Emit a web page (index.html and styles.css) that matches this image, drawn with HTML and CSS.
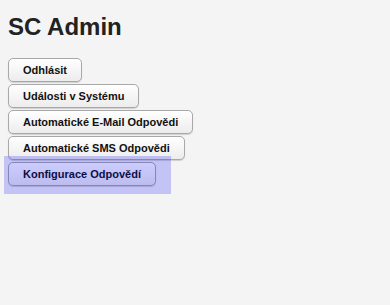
FILE: index.html
```html
<!DOCTYPE html>
<html lang="cs">
<head>
    <meta charset="UTF-8"/>
    <title>SC Admin</title>
    <link rel="stylesheet" href="styles.css">
</head>
<body>

<h1>SC Admin</h1>
<div class="menu">
    <button type="button">Odhlásit</button>
    <button type="button">Události v Systému</button>
    <button type="button">Automatické E-Mail Odpovědi</button>
    <button type="button">Automatické SMS Odpovědi</button>
    <div class="active-item">
        <button type="button">Konfigurace Odpovědí</button>
    </div>
</div>

</body>
</html>
```

FILE: styles.css
```css
body {
  font-family: "Liberation Sans", Arial, sans-serif;
  background: #f4f4f4;
  margin: 0;
  padding: 8px;
  color: #222;
}
h1 {
  font-size: 24px;
  font-weight: bold;
  margin: 5px 0 17px 0;
  line-height: 28px;
}
.menu {
  display: flex;
  flex-direction: column;
  align-items: flex-start;
  gap: 2px;
}
button {
  font-family: "Liberation Sans", Arial, sans-serif;
  font-size: 11px;
  font-weight: bold;
  color: #111;
  height: 24px;
  padding: 0 14px;
  background: linear-gradient(#ffffff, #ececec);
  border: 1px solid #a8a8a8;
  border-radius: 5px;
  box-shadow: 0 1px 1px rgba(0,0,0,0.15);
  cursor: pointer;
}
.active-item {
  position: relative;
  display: flex;
}
.active-item::after {
  content: "";
  position: absolute;
  left: -4px;
  right: -15px;
  top: -6px;
  bottom: -8px;
  background: rgba(0, 0, 255, 0.2);
}
```
